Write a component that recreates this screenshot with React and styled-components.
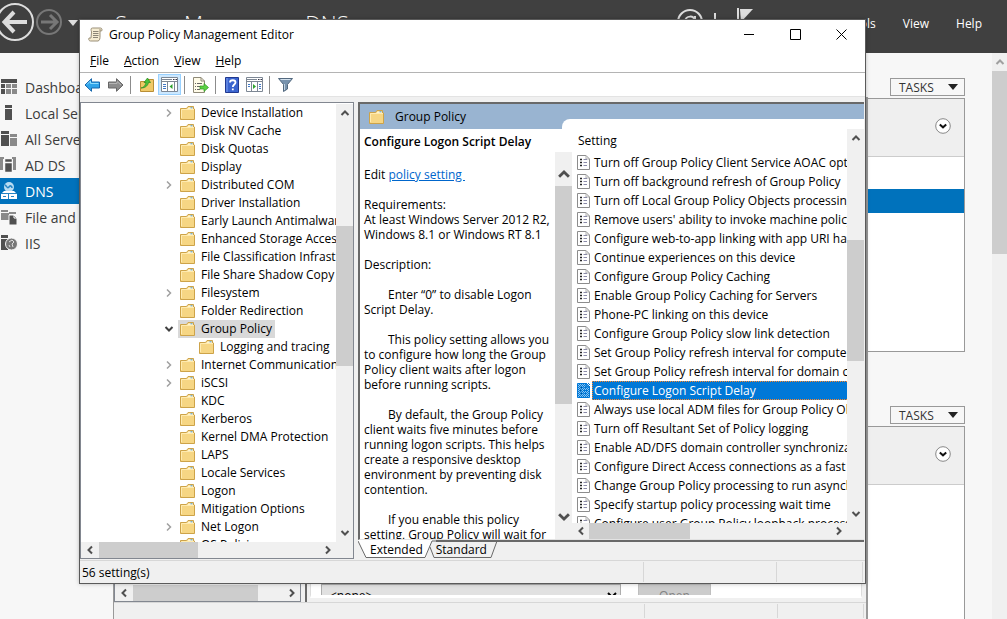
import React, {useState} from 'react'
import styled, {createGlobalStyle} from 'styled-components'

const GlobalStyle = createGlobalStyle`
  * {
    box-sizing: border-box;
  }

  body {
    margin: 0;
    background: #f7f7f7;
    font-family: "Open Sans", "Noto Sans", sans-serif;
    font-size: 12px;
    color: #000;
  }

  button, select {
    font-family: inherit;
    font-size: inherit;
    color: inherit;
    margin: 0;
    padding: 0;
    border: none;
    background: none;
  }
`

/* ---------- server manager ---------- */

const Desktop = styled.div`
  position: relative;
  height: 100vh;
  display: flex;
  flex-direction: column;
  overflow: hidden;
`

const TopBar = styled.header`
  height: 53px;
  flex: none;
  display: flex;
  justify-content: space-between;
  background: #404040;
  color: #fff;
  white-space: nowrap;
`

const TopLeft = styled.div`
  display: flex;
  align-items: center;
  height: 46px;
`

const TopRight = styled.nav`
  display: flex;
  align-items: center;
  height: 46px;
  padding-right: 25px;
`

const NavButton = styled.button`
  display: flex;
`

const Crumbs = styled.h1`
  margin: 0 0 0 36px;
  font-size: 22px;
  font-weight: 300;
  line-height: 46px;
`

const TopButton = styled.button`
  margin-left: ${props => props.$gap || 27}px;
`

const TopIcon = styled.button`
  display: flex;
  margin-right: ${props => props.$gap || 0}px;
`

const Main = styled.div`
  flex: 1;
  min-height: 0;
  display: flex;
`

const Sidebar = styled.nav`
  width: 170px;
  flex: none;
  padding-top: 21px;
`

const SideLink = styled.a`
  display: flex;
  align-items: center;
  gap: 6px;
  height: 26px;
  font-size: 14px;
  white-space: nowrap;
  text-decoration: none;
  color: ${props => props.$active ? '#fff' : '#3c3c3c'};
  background: ${props => props.$active ? '#0072bc' : 'transparent'};

  svg {
    flex: none;
  }
`

const Tiles = styled.main`
  flex: 1;
  padding: 25px 27px 0 0;
  overflow: hidden;
`

const TileHead = styled.div`
  display: flex;
  justify-content: flex-end;
`

const Tasks = styled.button`
  width: 75px;
  height: 18px;
  display: flex;
  align-items: center;
  justify-content: space-between;
  padding: 0 6px 0 8px;
  border: 1px solid #999;
  color: #333;
`

const Tile = styled.section`
  height: 254px;
  margin: 2px 0 54px;
  border: 1px solid #999;
  background: #fff;
`

const TileFilter = styled.div`
  height: 58px;
  display: flex;
  align-items: center;
  justify-content: flex-end;
  padding: 0 13px 4px 0;
  border-bottom: 1px solid #ccc;
  background: #efefef;
`

const TileRow = styled.div`
  height: 24px;
  margin-top: 32px;
  background: #0072bc;
`

/* ---------- scroll bars ---------- */

const VBar = styled.div`
  width: ${props => props.$width || 17}px;
  flex: none;
  display: grid;
  grid-template-rows: 18px ${props => props.$before}fr ${props => props.$thumb}fr ${props => props.$after}fr 18px;
  padding: ${props => props.$inset || 0}px 0;
  background: #f0f0f0;
`

const HBar = styled.div`
  height: 16px;
  flex: 1;
  min-width: 0;
  display: grid;
  grid-template-columns: 17px ${props => props.$before}fr ${props => props.$thumb}fr ${props => props.$after}fr 17px;
  background: #f0f0f0;
`

const PageBar = styled.div`
  width: 15px;
  flex: none;
  display: grid;
  grid-template-rows: 18px 1fr 2fr;
  background: #f0f0f0;
`

const Thumb = styled.div`
  background: #cdcdcd;
`

const Arrow = styled.button`
  display: flex;
  align-items: center;
  justify-content: center;
`

const Corner = styled.div`
  width: 17px;
  flex: none;
  background: #f0f0f0;
`

/* ---------- windows ---------- */

const BackWindow = styled.div`
  position: absolute;
  top: 97px;
  left: 113px;
  right: 139px;
  bottom: 0;
  display: flex;
  flex-direction: column;
  border: 2px solid #999;
  border-width: 1px 2px 0 1px;
  background: #f0f0f0;
`

const BackBody = styled.div`
  flex: 1;
  min-height: 0;
  display: flex;
  gap: 4px;
`

const BackTree = styled.div`
  width: 187px;
  flex: none;
  display: flex;
  align-items: flex-end;
  border: 1px solid #828790;
`

const BackPane = styled.div`
  flex: 1;
  min-width: 0;
  display: flex;
  padding: 0 4px 4px 3px;
  border-left: 2px solid #696969;
`

const BackForm = styled.div`
  flex: 1;
  min-width: 0;
  display: flex;
  align-items: flex-end;
  gap: 17px;
  overflow: hidden;
  padding-left: 10px;
  border: 1px solid #dcdcdc;
  border-bottom: 3px solid #fff;
  background: #fff;
`

const BackSelect = styled.select`
  flex: 0 1 300px;
  height: 23px;
  margin-bottom: -12px;
  padding: 0 4px;
  border: 1px solid #adadad;
  background: #e1e1e1;
`

const BackButton = styled.button`
  width: 73px;
  height: 23px;
  margin-bottom: -12px;
  border: 1px solid #bfbfbf;
  background: #ccc;
  color: #838383;
`

const Window = styled.div`
  position: absolute;
  top: 19px;
  left: 79px;
  right: 141px;
  bottom: 35px;
  display: flex;
  flex-direction: column;
  border: 1px solid #5a5a5a;
  background: #f0f0f0;
  box-shadow: 0 0 4px rgba(0, 0, 0, 0.25);
`

const TitleBar = styled.div`
  height: 30px;
  flex: none;
  display: flex;
  align-items: center;
  padding: 0 1px 1px 8px;
  gap: 6px;
  background: #fff;
`

const Title = styled.h2`
  flex: 1;
  margin: 0;
  font-size: 12px;
  font-weight: 400;
`

const Caption = styled.div`
  display: flex;
  align-self: stretch;
`

const CaptionButton = styled.button`
  width: 46px;
  display: flex;
  align-items: center;
  justify-content: center;
`

const MenuBar = styled.div`
  height: 23px;
  flex: none;
  display: flex;
  align-items: center;
  gap: 15px;
  padding: 0 0 2px 10px;
  border-bottom: 1px solid #b4b4b4;
  background: #fff;
`

const ToolBar = styled.div`
  height: 23px;
  flex: none;
  display: flex;
  align-items: center;
  padding-left: 1px;
  background: #fff;
`

const Tool = styled.button`
  width: 23px;
  height: 21px;
  display: flex;
  align-items: center;
  justify-content: center;
  border: 1px solid ${props => props.$on ? '#99d1ff' : 'transparent'};
  background: ${props => props.$on ? '#cce8ff' : 'none'};
`

const Divider = styled.span`
  width: 1px;
  height: 18px;
  margin: 0 4px 0 3px;
  background: #8c8c8c;
`

const Body = styled.div`
  flex: 1;
  min-height: 0;
  display: flex;
  gap: 4px;
  padding: 5px 1px 0 0;
  border-top: 1px solid #e3e3e3;
`

const StatusBar = styled.footer`
  height: ${props => props.$height}px;
  flex: none;
  display: flex;
  align-items: stretch;
  line-height: 21px;
  padding: 1px 2px 1px;
  border-top: 1px solid #d7d7d7;
`

const StatusCell = styled.span`
  flex: ${props => props.$width ? `0 0 ${props.$width}px` : 1};
  border-right: 1px solid #d7d7d7;
`

/* ---------- tree ---------- */

const TreePane = styled.div`
  width: 274px;
  flex: none;
  display: flex;
  flex-direction: column;
  margin-bottom: 1px;
  padding: 1px 0 0;
  border: 1px solid #828790;
  background: #fff;
`

const TreeBody = styled.div`
  flex: 1;
  min-height: 0;
  display: flex;
`

const TreeList = styled.ul`
  flex: 1;
  min-width: 0;
  margin: 0;
  padding: 0;
  overflow: hidden;
  list-style: none;
`

const TreeItem = styled.li`
  display: flex;
  align-items: center;
  height: 18px;
  padding-left: ${props => props.$level ? 98 : 79}px;
  white-space: nowrap;
`

const Twisty = styled.span`
  width: 18px;
  flex: none;
  display: flex;
  justify-content: center;
`

const TreeLabel = styled.span`
  display: flex;
  align-items: center;
  gap: 6px;
  height: 18px;
  padding: 0 3px 1px 2px;
  background: ${props => props.$active ? '#d9d9d9' : 'transparent'};
`

const BottomScroll = styled.div`
  flex: none;
  display: flex;
`

/* ---------- result pane ---------- */

const Result = styled.div`
  flex: 1;
  min-width: 0;
  display: flex;
  flex-direction: column;
`

const ResultBox = styled.div`
  flex: 1;
  min-height: 0;
  display: flex;
  flex-direction: column;
  border: 2px solid #696969;
  border-width: 2px 0 0 2px;
  border-bottom: 1px solid #e3e3e3;
  background: #fff;
`

const Banner = styled.div`
  height: 25px;
  flex: none;
  display: flex;
  background: #99b4d1;
`

const BannerTitle = styled.div`
  width: 202px;
  display: flex;
  align-items: center;
  gap: 11px;
  padding-left: 9px;
`

const BannerTab = styled.div`
  flex: 1;
  height: 10px;
  align-self: flex-end;
  border-top-left-radius: 8px;
  background: #fff;
`

const Columns = styled.div`
  flex: 1;
  min-height: 0;
  display: flex;
`

const Details = styled.div`
  width: 212px;
  flex: none;
  display: flex;
  flex-direction: column;
`

const PolicyName = styled.h3`
  height: 23px;
  flex: none;
  margin: 0;
  padding-left: 4px;
  font-size: 12px;
  font-weight: 600;
  line-height: 25px;
`

const DetailsBody = styled.div`
  flex: 1;
  min-height: 0;
  display: flex;
`

const DetailsText = styled.div`
  flex: 1;
  min-width: 0;
  padding: 15px 0 0 4px;
  overflow: hidden;
  line-height: 15px;
  white-space: pre;
`

const Para = styled.p`
  margin: 0 0 15px;
  text-indent: ${props => props.$indent ? 24 : 0}px;
`

const Link = styled.a`
  color: #0066cc;
`

const Settings = styled.div`
  flex: 1;
  min-width: 0;
  display: flex;
  flex-direction: column;
`

const SettingsTop = styled.div`
  flex: 1;
  min-height: 0;
  display: flex;
`

const SettingsMain = styled.div`
  flex: 1;
  min-width: 0;
  display: flex;
  flex-direction: column;
`

const SettingsHead = styled.button`
  height: 24px;
  flex: none;
  padding-left: 6px;
  line-height: 24px;
  text-align: left;
`

const SettingsList = styled.ul`
  flex: 1;
  min-height: 0;
  margin: 0;
  padding: 0 0 0 5px;
  overflow: hidden;
  list-style: none;
`

const SettingItem = styled.li`
  display: flex;
  align-items: center;
  gap: 2px;
  height: 19px;
  cursor: default;
`

const SettingLabel = styled.span`
  flex: 1;
  height: 19px;
  padding-left: 1px;
  overflow: hidden;
  line-height: 17px;
  white-space: nowrap;
  border: 1px dotted ${props => props.$active ? '#ff8728' : 'transparent'};
  border-right: none;
  color: ${props => props.$active ? '#fff' : '#000'};
  background: ${props => props.$active ? '#0078d7' : 'transparent'};
`

const Tabs = styled.div`
  height: 20px;
  flex: none;
  display: flex;
  align-items: flex-start;
`

const Tab = styled.button`
  height: 18px;
  border-top: 2px solid ${props => props.$active ? '#fff' : '#696969'};
  border-bottom: 1px solid #696969;
  background: ${props => props.$active ? '#fff' : '#f0f0f0'};
  line-height: 15px;
`

const TabRest = styled.span`
  flex: 1;
  border-top: 2px solid #696969;
`

const Slant = styled.svg`
  flex: none;
  display: block;
`

/* ---------- drawings ---------- */

const turns = {down: 0, left: 90, up: 180, right: 270}

function Chevron({dir, size = 10, color = '#505050', width = 2}) {
  return (
    <svg width={size} height={size} viewBox="0 0 10 10">
      <path d="M1.5 3L5 6.5L8.500 3" fill="none" stroke={color} strokeWidth={width} transform={`rotate(${turns[dir]} 5 5)`}/>
    </svg>
  )
}

function Folder() {
  return (
    <svg width="15" height="14" viewBox="0 0 15 14">
      <path d="M.5 13.500V2.500H6.500L8 .5H13.500V3H14.500V13.500Z" fill="#f6d684" stroke="#cda349"/>
      <path d="M8.500 1.500H13V3H7.500Z" fill="#fff5d0"/>
      <path d="M10.500 1.800H12.500" stroke="#4b9de0"/>
      <path d="M1.500 12V3.500H14" fill="none" stroke="#ffebb0"/>
    </svg>
  )
}

function PolicyIcon({active}) {
  return (
    <svg width="13" height="15" viewBox="0 0 13 15">
      <path d="M.5 .5H9L12.500 4V14.500H.5Z" fill={active ? '#8cc4f0' : '#fff'} stroke={active ? '#0078d7' : '#8c8c8c'}/>
      <path d="M9 .5V4H12.500" fill="none" stroke={active ? '#0078d7' : '#b0b0b0'}/>
      <path d="M3 4.500H5M3 7.500H5M3 10.500H5" stroke={active ? '#00569c' : '#222'} strokeWidth="1.600"/>
      <path d="M6.500 4.500H10M6.500 7.500H10M6.500 10.500H10" stroke={active ? '#0078d7' : '#8a8aa8'}/>
      {active && <>
        <path d="M0 1.500H13M0 3.500H13M0 5.500H13M0 7.500H13M0 9.500H13M0 11.500H13M0 13.500H13" stroke="#0078d7" strokeDasharray="1 1"/>
        <path d="M1 .5H13M1 2.500H13M1 4.500H13M1 6.500H13M1 8.500H13M1 10.500H13M1 12.500H13M1 14.500H13" stroke="#0078d7" strokeDasharray="1 1"/>
      </>}
    </svg>
  )
}

function Scroll() {
  return (
    <svg width="15" height="15" viewBox="0 0 15 15">
      <path d="M4.500 1C2.500 1 3 3 3.500 5L3 11H1C.2 13 1.500 14 2.500 14H10C12 13.500 12 11 12 9V4H13.500C14.500 3 14 1 12.500 1Z" fill="#f5ecd2" stroke="#9a8f78"/>
      <path d="M12 4V2" stroke="#9a8f78"/>
      <path d="M5 4.500H10.500M5 6.500H10.500M5 8.500H10.500M5 10.500H10" stroke="#8b8577"/>
    </svg>
  )
}

function ToolArrow({color, edge, flip}) {
  return (
    <svg width="17" height="14" viewBox="0 0 17 14">
      <path d="M1 7L7.500 .7V4H15.500V10H7.500V13.300Z" fill={color} stroke={edge} transform={flip ? 'rotate(180 8.500 7)' : undefined}/>
      {flip
        ? <path d="M2 5.500H10V3.500L14 7" fill="none" stroke="#b5b5b5"/>
        : <path d="M3 6.500L6.500 3V5.500H14.500" fill="none" stroke="#8fdcff"/>}
    </svg>
  )
}

function PanelIcon({flip}) {
  return (
    <svg width="17" height="15" viewBox="0 0 17 15">
      <path d="M.5 .5H16.500V14.500H.5Z" fill="#fff" stroke="#7d8794"/>
      <path d="M1 2.500H11M1 4.500H16" stroke="#7d8794"/>
      <path d="M12 2.500H13.500M14.500 2.500H16" stroke="#334"/>
      {flip ? <>
        <path d="M5.500 5V14M11.500 5V14" stroke="#7d8794"/>
        <path d="M13 7.500H15M13 9.500H15M13 11.500H15M2 7.500H4M2 9.500H4" stroke="#3f78c8"/>
        <path d="M7 7L10 9.500L7 12Z" fill="#2da32d"/>
      </> : <>
        <path d="M6.500 5V14M13.500 5V14" stroke="#7d8794"/>
        <path d="M2 7.500H5M2 9.500H5M2 11.500H5" stroke="#3f78c8"/>
        <path d="M11.500 7L8.500 9.500L11.500 12Z" fill="#2da32d"/>
      </>}
    </svg>
  )
}

function UpFolder() {
  return (
    <svg width="16" height="16" viewBox="0 0 16 16">
      <path d="M1.500 14.500V4.500H7L9 2.500H14.500V14.500Z" fill="#f0c968" stroke="#b98e35"/>
      <path d="M2 11C6 10 6.500 7 7 5.500H5L8.500 1L11.500 5.500H9.500C9 8 7 11 2 11Z" fill="#4cc13b" stroke="#26891c" strokeWidth=".7"/>
    </svg>
  )
}

function ExportIcon() {
  return (
    <svg width="17" height="16" viewBox="0 0 17 16">
      <path d="M1.500 .5H9L12.500 4V15.500H1.500Z" fill="#fffbe8" stroke="#8f8a78"/>
      <path d="M9 .5V4H12.500" fill="none" stroke="#8f8a78"/>
      <path d="M3 6.500H4M5 6.500H10M3 9.500H4M5 9.500H8M3 12.500H4M5 12.500H8" stroke="#666"/>
      <path d="M8 9H12V6.500L16.500 10.500L12 14.500V12H8Z" fill="#5bd143" stroke="#2f9a22" strokeWidth=".7"/>
    </svg>
  )
}

function HelpIcon() {
  return (
    <svg width="14" height="16" viewBox="0 0 14 16">
      <path d="M.5 .5H13.500V15.500H.5Z" fill="#3a64cf" stroke="#20388f"/>
      <path d="M2 1V15" stroke="#7ea0f0"/>
      <path d="M5 5.500C5 2.500 10.500 2.500 10.500 5.500C10.500 7.500 7.800 7.500 7.800 10M7.800 11.500V13.200" fill="none" stroke="#fff" strokeWidth="1.800"/>
    </svg>
  )
}

function FilterIcon() {
  return (
    <svg width="15" height="15" viewBox="0 0 15 15">
      <path d="M.5 1.500H14.500L9.500 7.500V12L5.500 14.500V7.500Z" fill="#7792ad" stroke="#53697f"/>
      <path d="M2.500 2.500H12.500" stroke="#d4e2ee"/>
      <path d="M6.500 7V13" stroke="#c3d4e2"/>
    </svg>
  )
}

function SideIcon({kind}) {
  const dark = '#505050'
  const light = '#8a8a8a'
  return (
    <svg width="19" height="18" viewBox="-1 0 19 18">
      {kind === 'dashboard' && <>
        <path d="M0 1H16V5H0ZM0 6H4V10H0ZM0 11H4V16H0Z" fill={dark}/>
        <path d="M5 6H10V10H5ZM11 6H16V10H11ZM5 11H10V16H5ZM11 11H16V16H11Z" fill={light}/>
      </>}
      {kind === 'local' && <path d="M4 1H11V4H4ZM4 5H11V16H4Z" fill={dark}/>}
      {kind === 'all' && <>
        <path d="M0 1H8V4H0ZM0 5H8V16H0Z" fill={dark}/>
        <path d="M9 4H16V7H9ZM9 8H16V16H9Z" fill={light}/>
      </>}
      {kind === 'ad' && <>
        <path d="M-1 3V1H3V3H2V14H-1ZM15 3V1H11V3H12V14H15Z" fill={light}/>
        <path d="M4 3H11V6H4ZM4 7H11V16H4Z" fill={dark} stroke="#f7f7f7" strokeWidth=".5"/>
      </>}
      {kind === 'dns' && <>
        <circle cx="8" cy="5" r="5" fill="#b8dcf2"/>
        <path d="M4 3C6 4 6 7 8 5C9 3 11 4 11 6" fill="none" stroke="#2584c4" strokeWidth="1.500"/>
        <path d="M3 9H13L15 11H16V17H0V11H1Z" fill="#fff"/>
        <path d="M0 11.500H16M7.500 11V17M2 14.500H5M10 14.500H13" stroke="#2584c4"/>
      </>}
      {kind === 'file' && <>
        <path d="M0 2H7V4H0ZM0 5H8V12H0ZM8 4H15V6H8Z" fill={light}/>
        <path d="M8 7H13L16 10V17H8Z" fill={dark} stroke="#f7f7f7"/>
        <path d="M13 7V10H16" stroke="#fff" fill="none"/>
      </>}
      {kind === 'iis' && <>
        <path d="M0 1H7V4H0ZM0 5H7V16H0Z" fill={dark}/>
        <circle cx="10.500" cy="10" r="6" fill="#777" stroke="#f7f7f7"/>
        <path d="M8 8L11 6L13 8L11 10L12 13M8 11L9 13" stroke="#ddd" fill="none"/>
      </>}
    </svg>
  )
}

/* ---------- data ---------- */

const sideItems = [
  ['dashboard', 'Dashboard'],
  ['local', 'Local Server'],
  ['all', 'All Servers'],
  ['ad', 'AD DS'],
  ['dns', 'DNS'],
  ['file', 'File and Storage'],
  ['iis', 'IIS'],
]

const treeItems = [
  {name: 'Device Installation', twisty: 'right'},
  {name: 'Disk NV Cache'},
  {name: 'Disk Quotas'},
  {name: 'Display'},
  {name: 'Distributed COM', twisty: 'right'},
  {name: 'Driver Installation'},
  {name: 'Early Launch Antimalware'},
  {name: 'Enhanced Storage Access'},
  {name: 'File Classification Infrastructure'},
  {name: 'File Share Shadow Copy Provider'},
  {name: 'Filesystem', twisty: 'right'},
  {name: 'Folder Redirection'},
  {name: 'Group Policy', twisty: 'down'},
  {name: 'Logging and tracing', level: 1},
  {name: 'Internet Communication Management', twisty: 'right'},
  {name: 'iSCSI', twisty: 'right'},
  {name: 'KDC'},
  {name: 'Kerberos'},
  {name: 'Kernel DMA Protection'},
  {name: 'LAPS'},
  {name: 'Locale Services'},
  {name: 'Logon'},
  {name: 'Mitigation Options'},
  {name: 'Net Logon', twisty: 'right'},
  {name: 'OS Policies'},
]

const settings = [
  'Turn off Group Policy Client Service AOAC optimization',
  'Turn off background refresh of Group Policy',
  'Turn off Local Group Policy Objects processing',
  'Remove users\' ability to invoke machine policy refresh',
  'Configure web-to-app linking with app URI handlers',
  'Continue experiences on this device',
  'Configure Group Policy Caching',
  'Enable Group Policy Caching for Servers',
  'Phone-PC linking on this device',
  'Configure Group Policy slow link detection',
  'Set Group Policy refresh interval for computers',
  'Set Group Policy refresh interval for domain controllers',
  'Configure Logon Script Delay',
  'Always use local ADM files for Group Policy Object Editor',
  'Turn off Resultant Set of Policy logging',
  'Enable AD/DFS domain controller synchronization during policy refresh',
  'Configure Direct Access connections as a fast network connection',
  'Change Group Policy processing to run asynchronously',
  'Specify startup policy processing wait time',
  'Configure user Group Policy loopback processing mode',
]

const helpText = [
  'Enter “0” to disable Logon\nScript Delay.',
  'This policy setting allows you\nto configure how long the Group\nPolicy client waits after logon\nbefore running scripts.',
  'By default, the Group Policy\nclient waits five minutes before\nrunning logon scripts. This helps\ncreate a responsive desktop\nenvironment by preventing disk\ncontention.',
  'If you enable this policy\nsetting, Group Policy will wait for',
]

/* ---------- parts ---------- */

function VScroll({before, thumb, after, size, inset}) {
  return (
    <VBar $before={before} $thumb={thumb} $after={after} $inset={inset}>
      <Arrow aria-label="Scroll up"><Chevron dir="up" size={size}/></Arrow>
      <span/>
      <Thumb/>
      <span/>
      <Arrow aria-label="Scroll down"><Chevron dir="down" size={size}/></Arrow>
    </VBar>
  )
}

function HScroll({before, thumb, after}) {
  return (
    <HBar $before={before} $thumb={thumb} $after={after}>
      <Arrow aria-label="Scroll left"><Chevron dir="left"/></Arrow>
      <span/>
      <Thumb/>
      <span/>
      <Arrow aria-label="Scroll right"><Chevron dir="right"/></Arrow>
    </HBar>
  )
}

function ServerTile({children}) {
  return (
    <>
      <TileHead>
        <Tasks>
          TASKS
          <svg width="10" height="6" viewBox="0 0 10 6"><path d="M0 0H10L5 6Z" fill="#222"/></svg>
        </Tasks>
      </TileHead>
      <Tile>
        <TileFilter>
          <svg width="16" height="16" viewBox="0 0 16 16">
            <circle cx="8" cy="8" r="7.300" fill="#fff" stroke="#888"/>
            <path d="M4.800 6.500L8 9.300L11.200 6.500" fill="none" stroke="#111" strokeWidth="2"/>
          </svg>
        </TileFilter>
        {children}
      </Tile>
    </>
  )
}

function ServerManager() {
  return (
    <>
      <TopBar>
        <TopLeft>
          <NavButton aria-label="Back">
            <svg width="35" height="40" viewBox="0 0 35 40">
              <circle cx="15" cy="19" r="18" fill="none" stroke="#ddd" strokeWidth="2"/>
              <path d="M27 19H5M14 9L4.500 19L14 29" fill="none" stroke="#ddd" strokeWidth="4"/>
            </svg>
          </NavButton>
          <NavButton aria-label="Forward">
            <svg width="30" height="40" viewBox="0 0 30 40">
              <circle cx="14" cy="19" r="12" fill="none" stroke="#777" strokeWidth="2"/>
              <path d="M6 19H21M15 12L22 19L15 26" fill="none" stroke="#777" strokeWidth="3"/>
            </svg>
          </NavButton>
          <NavButton aria-label="History">
            <svg width="14" height="8" viewBox="0 0 14 8"><path d="M3 1H13L8 7Z" fill="#ddd"/></svg>
          </NavButton>
          <Crumbs>Server Manager &nbsp;▸ &nbsp;DNS</Crumbs>
        </TopLeft>
        <TopRight>
          <TopIcon aria-label="Refresh" $gap={11}>
            <svg width="26" height="28" viewBox="0 0 26 28">
              <circle cx="13" cy="13" r="12" fill="none" stroke="#ddd" strokeWidth="2"/>
              <path d="M8 13C8 6 18 6 18 12M18 7V13H13" fill="none" stroke="#ddd" strokeWidth="2"/>
            </svg>
          </TopIcon>
          <svg width="2" height="20"><path d="M1 0V20" stroke="#ddd" strokeWidth="2"/></svg>
          <TopIcon aria-label="Notifications">
            <svg width="38" height="30" viewBox="0 0 38 30">
              <path d="M22 0V30" stroke="#ddd" strokeWidth="2"/>
              <path d="M24 1H37L25 14Z" fill="#ddd"/>
            </svg>
          </TopIcon>
          <TopButton $gap={20}>Manage</TopButton>
          <TopButton>Tools</TopButton>
          <TopButton>View</TopButton>
          <TopButton>Help</TopButton>
        </TopRight>
      </TopBar>
      <Main>
        <Sidebar>
          {sideItems.map(([kind, name]) => (
            <SideLink key={kind} href="#" $active={kind === 'dns'}>
              <SideIcon kind={kind}/>
              {name}
            </SideLink>
          ))}
        </Sidebar>
        <Tiles>
          <ServerTile><TileRow/></ServerTile>
          <ServerTile/>
        </Tiles>
        <PageBar>
          <Arrow aria-label="Scroll up"><Chevron dir="up" color="#a0a0a0"/></Arrow>
          <Thumb/>
        </PageBar>
      </Main>
    </>
  )
}

function PolicyManagement() {
  return (
    <BackWindow>
      <BackBody>
        <BackTree>
          <HScroll before={1} thumb={124} after={25}/>
        </BackTree>
        <BackPane>
          <BackForm>
            <BackSelect aria-label="WMI filter"><option>{'<none>'}</option></BackSelect>
            <BackButton disabled>Open</BackButton>
          </BackForm>
        </BackPane>
      </BackBody>
      <StatusBar $height={17}>
        <StatusCell/>
        <StatusCell $width={133}/>
        <StatusCell $width={86}/>
      </StatusBar>
    </BackWindow>
  )
}

function Tree() {
  return (
    <TreePane>
      <TreeBody>
        <TreeList>
          {treeItems.map(item => (
            <TreeItem key={item.name} $level={item.level}>
              <Twisty>
                {item.twisty && <Chevron dir={item.twisty} width={item.twisty === 'down' ? 2 : 1.5} color={item.twisty === 'down' ? '#404040' : '#a0a0a0'}/>}
              </Twisty>
              <TreeLabel $active={item.twisty === 'down'}>
                <Folder/>
                {item.name}
              </TreeLabel>
            </TreeItem>
          ))}
        </TreeList>
        <VScroll before={104} thumb={140} after={158}/>
      </TreeBody>
      <BottomScroll>
        <HScroll before={1} thumb={99} after={121}/>
        <Corner/>
      </BottomScroll>
    </TreePane>
  )
}

function Editor() {
  const [selected, setSelected] = useState(12)

  return (
    <Window>
      <TitleBar>
        <Scroll/>
        <Title>Group Policy Management Editor</Title>
        <Caption>
          <CaptionButton aria-label="Minimize">
            <svg width="11" height="11"><path d="M0 5.500H10" stroke="#000"/></svg>
          </CaptionButton>
          <CaptionButton aria-label="Maximize">
            <svg width="11" height="11"><path d="M.5 .5H10.500V10.500H.5Z" fill="none" stroke="#000"/></svg>
          </CaptionButton>
          <CaptionButton aria-label="Close">
            <svg width="11" height="11"><path d="M.5 .5L10.500 10.500M10.500 .5L.5 10.500" stroke="#000"/></svg>
          </CaptionButton>
        </Caption>
      </TitleBar>
      <MenuBar>
        <button><u>F</u>ile</button>
        <button><u>A</u>ction</button>
        <button><u>V</u>iew</button>
        <button><u>H</u>elp</button>
      </MenuBar>
      <ToolBar>
        <Tool aria-label="Back"><ToolArrow color="#2fa4ea" edge="#1767ad"/></Tool>
        <Tool aria-label="Forward"><ToolArrow color="#8c8c8c" edge="#666" flip/></Tool>
        <Divider/>
        <Tool aria-label="Up"><UpFolder/></Tool>
        <Tool aria-label="Console tree" $on><PanelIcon/></Tool>
        <Divider/>
        <Tool aria-label="Export list"><ExportIcon/></Tool>
        <Divider/>
        <Tool aria-label="Help"><HelpIcon/></Tool>
        <Tool aria-label="Action pane"><PanelIcon flip/></Tool>
        <Divider/>
        <Tool aria-label="Filter"><FilterIcon/></Tool>
      </ToolBar>
      <Body>
        <Tree/>
        <Result>
          <ResultBox>
            <Banner>
              <BannerTitle><Folder/>Group Policy</BannerTitle>
              <BannerTab/>
            </Banner>
            <Columns>
              <Details>
                <PolicyName>Configure Logon Script Delay</PolicyName>
                <DetailsBody>
                  <DetailsText>
                    <Para>Edit <Link href="#">policy setting </Link></Para>
                    <Para>{'Requirements:\nAt least Windows Server 2012 R2,\nWindows 8.1 or Windows RT 8.1'}</Para>
                    <Para>Description:</Para>
                    {helpText.map(text => <Para key={text} $indent>{text}</Para>)}
                  </DetailsText>
                  <VScroll before={3} thumb={217} after={104} size={14} inset={13}/>
                </DetailsBody>
              </Details>
              <Settings>
                <SettingsTop>
                  <SettingsMain>
                    <SettingsHead>Setting</SettingsHead>
                    <SettingsList>
                      {settings.map((name, index) => (
                        <SettingItem key={name} onClick={() => setSelected(index)}>
                          <PolicyIcon active={index === selected}/>
                          <SettingLabel $active={index === selected}>{name}</SettingLabel>
                        </SettingItem>
                      ))}
                    </SettingsList>
                  </SettingsMain>
                  <VScroll before={93} thumb={120} after={144}/>
                </SettingsTop>
                <BottomScroll>
                  <HScroll before={0} thumb={101} after={140}/>
                  <Corner/>
                </BottomScroll>
              </Settings>
            </Columns>
          </ResultBox>
          <Tabs>
            <Slant width="12" height="18">
              <path d="M0 0H12V18H8Z" fill="#fff"/>
              <path d="M0 1L8 17.500H12" fill="none" stroke="#696969"/>
            </Slant>
            <Tab $active>Extended</Tab>
            <Slant width="13" height="18">
              <path d="M0 0H9L3 18H0Z" fill="#fff"/>
              <path d="M0 17.500H2L9 1H13M7 7L11 17.500H13" fill="none" stroke="#696969"/>
            </Slant>
            <Tab>Standard</Tab>
            <Slant width="11" height="18">
              <path d="M0 1H11" stroke="#696969" strokeWidth="2"/>
              <path d="M0 17.500H4L10 1" fill="none" stroke="#696969"/>
            </Slant>
            <TabRest/>
          </Tabs>
        </Result>
      </Body>
      <StatusBar $height={23}>
        <StatusCell>56 setting(s)</StatusCell>
        <StatusCell $width={133}/>
        <StatusCell $width={86}/>
      </StatusBar>
    </Window>
  )
}

function App() {
  return (
    <Desktop>
      <GlobalStyle/>
      <ServerManager/>
      <PolicyManagement/>
      <Editor/>
    </Desktop>
  );
}

export default App;
